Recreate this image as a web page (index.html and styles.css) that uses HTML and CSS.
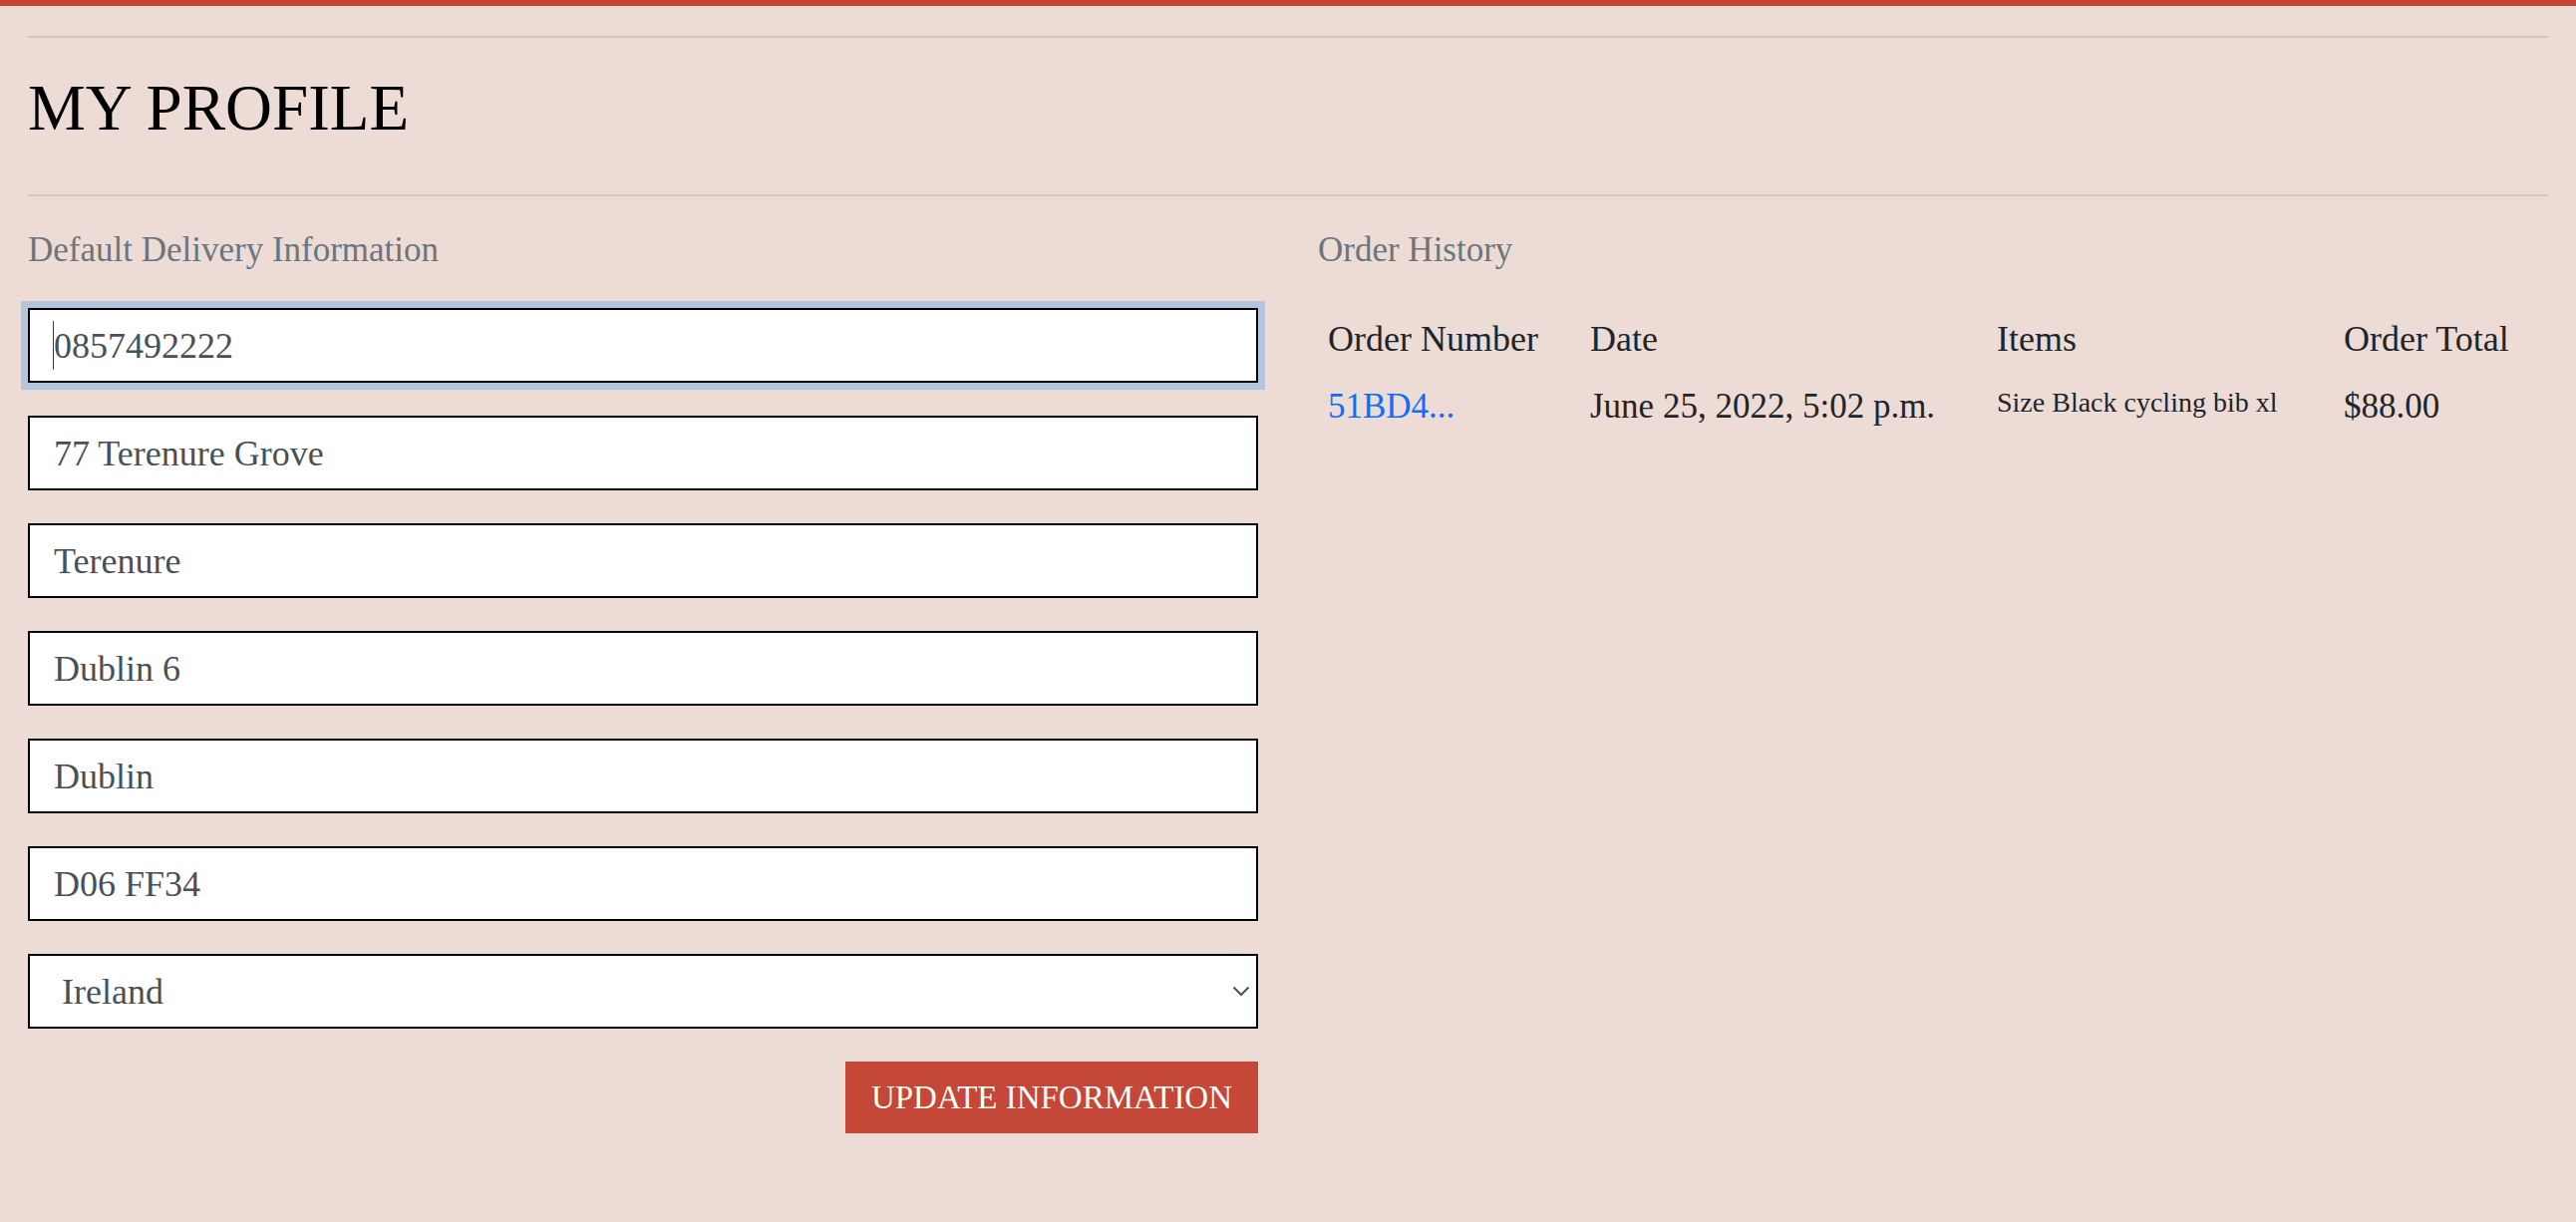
FILE: index.html
```html
<!DOCTYPE html>
<html lang="en">
<head>
<meta charset="utf-8">
<title>My Profile</title>
<link rel="stylesheet" href="styles.css">
</head>
<body>
<div class="topbar"></div>
<main class="page">
  <div class="rule rule-top"></div>
  <h1 class="page-title">MY PROFILE</h1>
  <div class="rule rule-bottom"></div>
  <div class="columns">
    <section class="col">
      <h2 class="section-title">Default Delivery Information</h2>
      <form class="delivery-form">
        <div class="field field-focused">
          <input class="text-input" type="text" value="0857492222">
          <span class="caret"></span>
        </div>
        <input class="text-input" type="text" value="77 Terenure Grove">
        <input class="text-input" type="text" value="Terenure">
        <input class="text-input" type="text" value="Dublin 6">
        <input class="text-input" type="text" value="Dublin">
        <input class="text-input" type="text" value="D06 FF34">
        <div class="select-wrap">
          <select class="select-input">
            <option>Ireland</option>
          </select>
          <svg class="chevron" width="18" height="11" viewBox="0 0 18 11" aria-hidden="true">
            <path d="M1.5 1.5 L9 9 L16.5 1.5" fill="none" stroke="#4d5157" stroke-width="2"/>
          </svg>
        </div>
        <div class="actions">
          <button class="btn-update" type="button">UPDATE INFORMATION</button>
        </div>
      </form>
    </section>
    <section class="col">
      <h2 class="section-title">Order History</h2>
      <table class="orders">
        <colgroup>
          <col class="c-num"><col class="c-date"><col class="c-items"><col class="c-total">
        </colgroup>
        <thead>
          <tr>
            <th>Order Number</th>
            <th>Date</th>
            <th>Items</th>
            <th>Order Total</th>
          </tr>
        </thead>
        <tbody>
          <tr>
            <td><a class="order-link" href="#">51BD4...</a></td>
            <td>June 25, 2022, 5:02 p.m.</td>
            <td class="items">Size Black cycling bib xl</td>
            <td>$88.00</td>
          </tr>
        </tbody>
      </table>
    </section>
  </div>
</main>
</body>
</html>
```

FILE: styles.css
```css
html, body {
  margin: 0;
  padding: 0;
}

body {
  background: #eddcd5;
  font-family: "Liberation Serif", "Times New Roman", serif;
  color: #212529;
  min-height: 1226px;
}

.topbar {
  height: 6px;
  background: #c44536;
}

.page {
  padding: 0 28px;
}

.rule {
  height: 2px;
  background: #d6c6bf;
}

.rule-top {
  margin-top: 30px;
}

.page-title {
  margin: 31px 0 47px;
  font-size: 65px;
  line-height: 79px;
  font-weight: 400;
  color: #000;
}

.columns {
  display: grid;
  grid-template-columns: 1fr 1fr;
  column-gap: 60px;
}

.section-title {
  margin: 33px 0 37px;
  font-size: 35px;
  line-height: 42px;
  font-weight: 400;
  color: #6c757d;
}

.delivery-form {
  display: flex;
  flex-direction: column;
  gap: 33px;
}

.field {
  position: relative;
}

.text-input,
.select-input {
  display: block;
  width: 100%;
  box-sizing: border-box;
  height: 75px;
  margin: 0;
  padding: 0 24px;
  border: 2px solid #000;
  border-radius: 0;
  background: #fff;
  font-family: "Liberation Serif", "Times New Roman", serif;
  font-size: 36px;
  color: #495057;
  outline: none;
}

.field-focused .text-input {
  box-shadow: 0 0 0 7px #b4c5de;
}

.caret {
  position: absolute;
  left: 25px;
  top: 13px;
  width: 1px;
  height: 49px;
  background: #3a3f45;
}

.select-wrap {
  position: relative;
}

.select-input {
  -webkit-appearance: none;
  appearance: none;
  padding: 0 60px 0 32px;
}

.chevron {
  position: absolute;
  right: 8px;
  top: 32px;
  pointer-events: none;
}

.actions {
  display: flex;
  justify-content: flex-end;
}

.btn-update {
  height: 72px;
  width: 414px;
  padding: 0 24px;
  border: 0;
  border-radius: 0;
  background: #c44737;
  color: #fff;
  font-family: "Liberation Serif", "Times New Roman", serif;
  font-size: 33px;
}

.orders {
  width: 100%;
  table-layout: fixed;
  border-collapse: collapse;
  color: #212529;
}

.c-num { width: 263px; }
.c-date { width: 408px; }
.c-items { width: 348px; }
.c-total { width: auto; }

.orders th,
.orders td {
  text-align: left;
  vertical-align: top;
  padding: 10px 10px;
  font-weight: 400;
}

.orders th {
  font-size: 36px;
  line-height: 43px;
  padding-bottom: 15px;
}

.orders td {
  font-size: 35px;
  line-height: 42px;
}

.orders td.items {
  font-size: 28px;
  line-height: 34px;
}

.order-link {
  color: #0d6efd;
  text-decoration: none;
}
```
